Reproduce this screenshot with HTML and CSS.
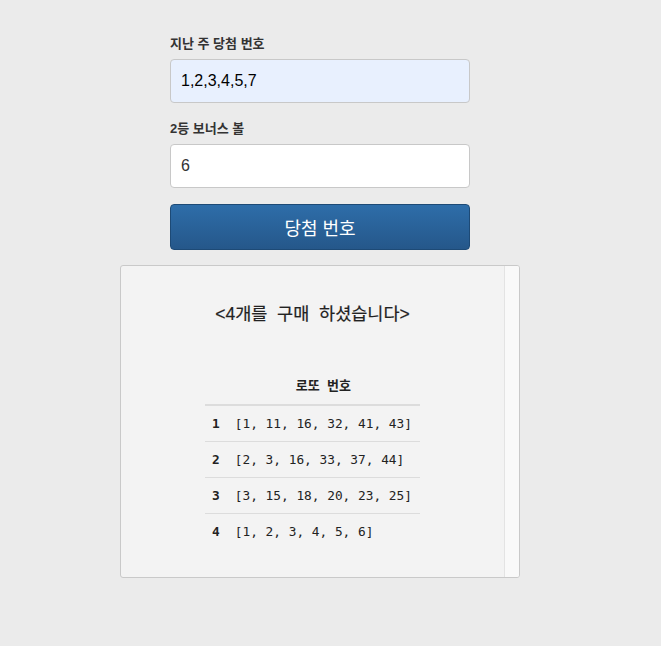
FILE: index.html
```html
<!DOCTYPE html>
<html lang="ko">
<head>
<meta charset="utf-8">
<link rel="stylesheet" href="styles.css">
</head>
<body>
<div class="wrap">
  <form class="form">
    <label class="label">지난 주 당첨 번호</label>
    <input class="input autofill" type="text" value="1,2,3,4,5,7">
    <label class="label second">2등 보너스 볼</label>
    <input class="input" type="text" value="6">
    <button class="btn" type="button">당첨 번호</button>
  </form>
  <div class="panel">
    <div class="content">
      <h3 class="title">&lt;4개를&nbsp;&nbsp;구매&nbsp;&nbsp;하셨습니다&gt;</h3>
      <table class="table">
        <thead>
          <tr><th></th><th class="head">로또&nbsp;&nbsp;번호</th></tr>
        </thead>
        <tbody>
          <tr><td class="num">1</td><td>[1, 11, 16, 32, 41, 43]</td></tr>
          <tr><td class="num">2</td><td>[2, 3, 16, 33, 37, 44]</td></tr>
          <tr><td class="num">3</td><td>[3, 15, 18, 20, 23, 25]</td></tr>
          <tr><td class="num">4</td><td>[1, 2, 3, 4, 5, 6]</td></tr>
        </tbody>
      </table>
    </div>
    <div class="track"></div>
  </div>
</div>
</body>
</html>
```
FILE: styles.css
```css
html, body {
  margin: 0;
  padding: 0;
  background: #ebebeb;
}
body {
  font-family: "Liberation Sans", "Noto Sans CJK KR", sans-serif;
  color: #333;
}
.wrap {
  width: 400px;
  margin-left: 120px;
  padding-top: 35px;
}
.form {
  display: flex;
  flex-direction: column;
  padding: 0 50px;
}
.label {
  font-size: 13px;
  font-weight: bold;
  line-height: 18px;
  margin-bottom: 6px;
  color: #333;
}
.label.second {
  margin-top: 17px;
}
.input {
  box-sizing: border-box;
  height: 44px;
  width: 300px;
  margin: 0;
  padding: 0 10px;
  border: 1px solid #c8c8c8;
  border-radius: 4px;
  background: #fff;
  font-family: "Liberation Sans", "Noto Sans CJK KR", sans-serif;
  font-size: 16px;
  color: #333;
  outline: none;
}
.input.autofill {
  background: #e8f0fe;
  color: #000;
}
.btn {
  box-sizing: border-box;
  margin-top: 16px;
  height: 46px;
  width: 300px;
  border: 1px solid #1d4a76;
  border-radius: 4px;
  background: linear-gradient(#2e6da9, #25578a);
  color: #fff;
  font-family: "Liberation Sans", "Noto Sans CJK KR", sans-serif;
  font-size: 18px;
  padding: 0;
}
.panel {
  box-sizing: border-box;
  margin-top: 15px;
  width: 400px;
  height: 313px;
  display: flex;
  background: #f3f3f3;
  border: 1px solid #c9c9c9;
  border-radius: 3px;
  overflow: hidden;
}
.content {
  flex: 1;
  display: flex;
  flex-direction: column;
  align-items: center;
}
.title {
  margin: 36px 0 0;
  font-size: 17.5px;
  line-height: 24px;
  font-weight: normal;
  color: #222;
  -webkit-text-stroke: 0.2px #222;
}
.track {
  width: 14px;
  border-left: 1px solid #e3e3e3;
  background: #f9f9f9;
}
.table {
  margin-top: 42px;
  border-collapse: collapse;
  font-family: "DejaVu Sans Mono", monospace;
  font-size: 12.8px;
  color: #222;
}
.table th {
  padding: 8px;
  line-height: 20px;
  border-bottom: 2px solid #dcdcdc;
  font-family: "Liberation Sans", "Noto Sans CJK KR", sans-serif;
  font-size: 13px;
  font-weight: bold;
  text-align: center;
}
.table td {
  padding: 8px 8px 8px 8px;
  line-height: 19px;
  text-align: left;
  white-space: pre;
}
.table td.num {
  padding-left: 7px;
  padding-right: 7px;
  font-weight: bold;
}
.table tbody tr + tr td {
  border-top: 1px solid #dcdcdc;
}
```
